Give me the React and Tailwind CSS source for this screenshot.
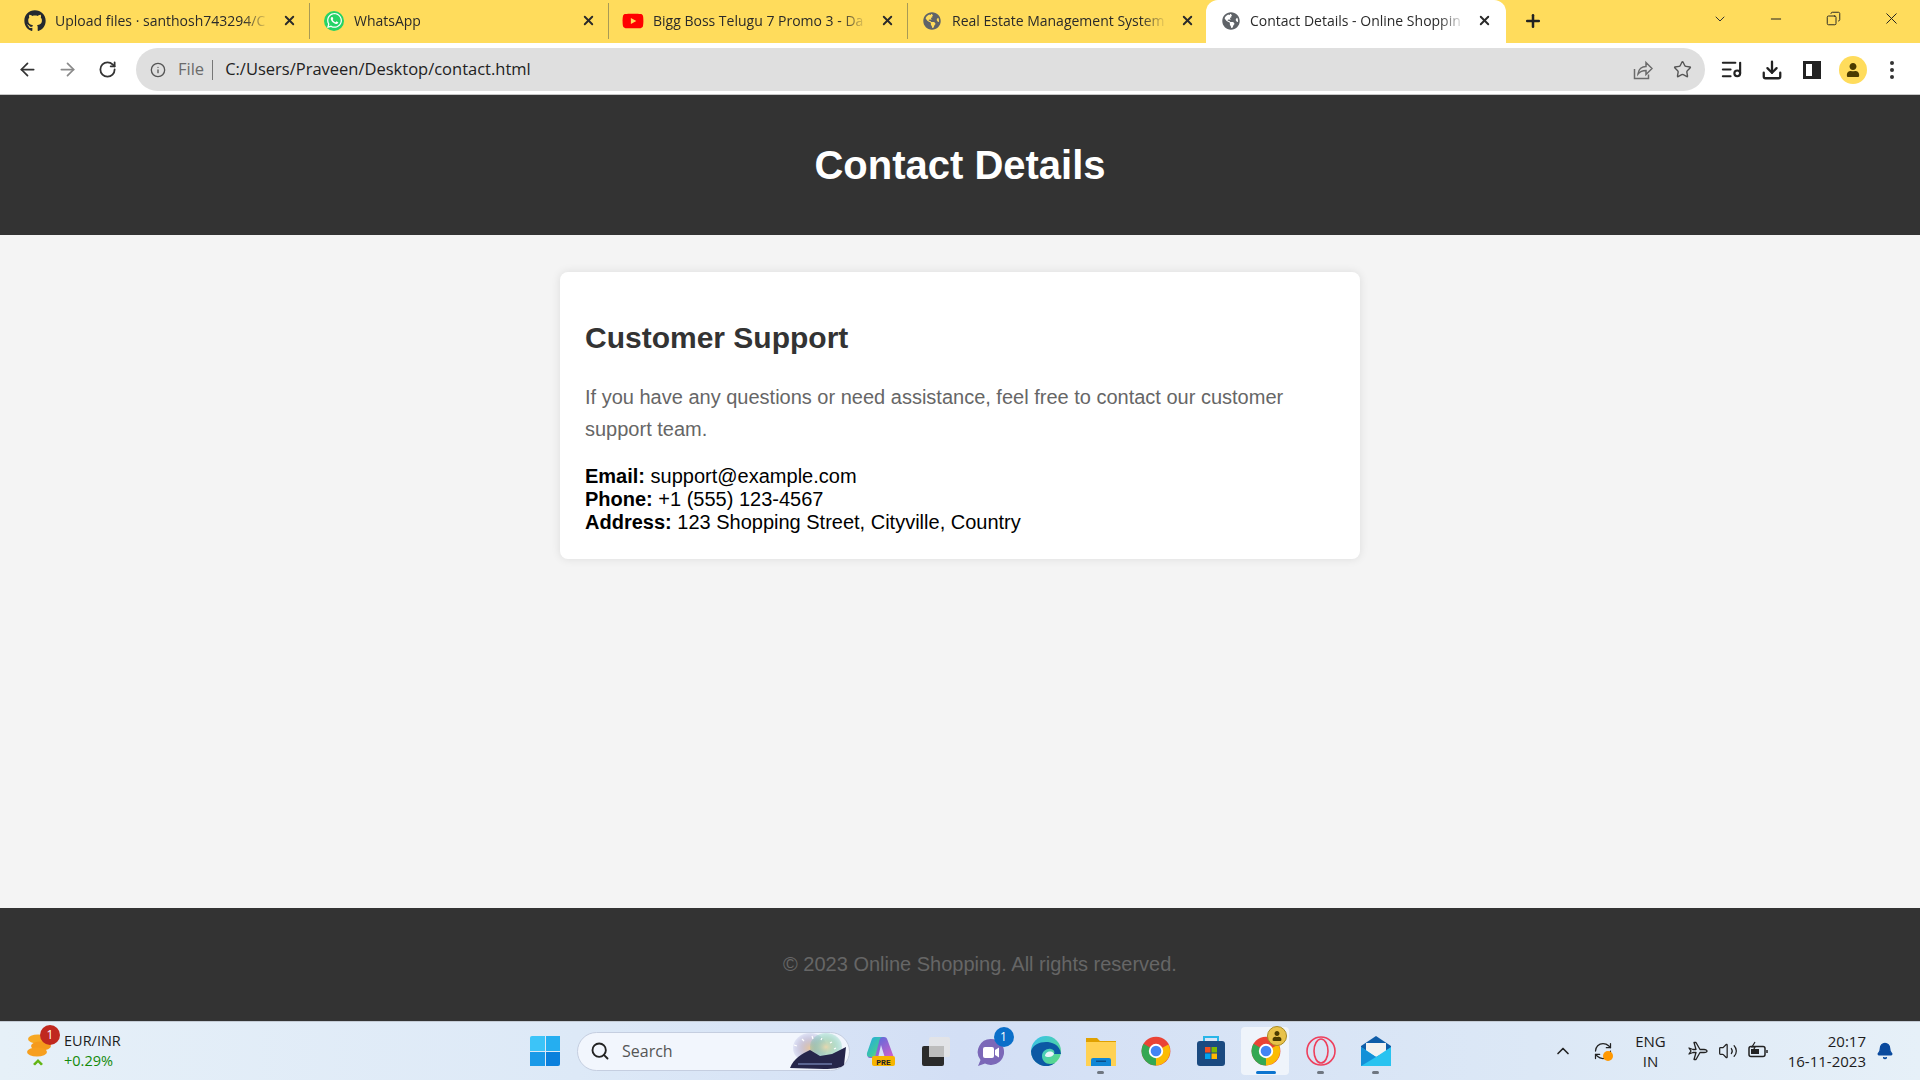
import { ArrowLeft, ArrowRight, RotateCw, Info, Star, ListMusic, Download, X, Plus, ChevronDown, Minus, Copy, Search, ChevronUp, Volume2, Bell, RefreshCw } from 'lucide-react';
import { FaGithub, FaWhatsapp, FaYoutube, FaGlobeAmericas, FaUser } from 'react-icons/fa';

const tabs = [
    { title: 'Upload files · santhosh743294/C', icon: <FaGithub className="text-[22px] text-[#24292f]" /> },
    {
        title: 'WhatsApp',
        icon: (
            <span className="w-[20px] h-[20px] rounded-full bg-[#25d366] flex items-center justify-center">
                <FaWhatsapp className="text-[17px] text-white" />
            </span>
        ),
    },
    { title: 'Bigg Boss Telugu 7 Promo 3 - Da', icon: <FaYoutube className="text-[22px] text-[#ff0000]" /> },
    { title: 'Real Estate Management System', icon: <FaGlobeAmericas className="text-[18px] text-[#5f6368]" /> },
];

const Tab = ({ title, icon, last }) => (
    <div className={`flex items-center h-[36px] mb-[2px] w-[299px] shrink-0 pl-[13px] pr-[10px] ${last ? '' : 'border-r border-[#a89a55]'}`}>
        <span className="w-[22px] flex justify-center shrink-0">{icon}</span>
        <span className="ml-[9px] flex-1 text-[14px] text-[#2a2a2a] whitespace-nowrap overflow-hidden [mask-image:linear-gradient(to_right,black_88%,transparent_100%)]">{title}</span>
        <X size={15} strokeWidth={3} className="ml-[13px] mr-[2px] text-[#2a2a2a] shrink-0" />
    </div>
);

const TabStrip = () => (
    <div className="flex items-center h-[43px] bg-[#ffdc5c] pl-[11px] shrink-0">
        {tabs.map((t, i) => <Tab key={t.title} {...t} last={i === 3} />)}
        <div className="flex items-center h-[43px] self-end w-[300px] ml-[-1px] pb-[2px] bg-white rounded-t-[12px] pl-[16px] pr-[14px] shrink-0">
            <FaGlobeAmericas className="text-[18px] text-[#5f6368] shrink-0" />
            <span className="ml-[10px] flex-1 text-[14px] text-[#2a2a2a] whitespace-nowrap overflow-hidden [mask-image:linear-gradient(to_right,black_88%,transparent_100%)]">Contact Details - Online Shoppin</span>
            <X size={15} strokeWidth={3} className="ml-[12px] text-[#2a2a2a] shrink-0" />
        </div>
        <Plus size={20} strokeWidth={3} className="ml-[17px] mb-[1px] text-[#222]" />
        <ChevronDown size={16} strokeWidth={1.5} className="ml-[169px] mb-[6px] text-[#333]" />
        <Minus size={16} strokeWidth={1.5} className="ml-[40px] mb-[6px] text-[#222]" />
        <Copy size={15} strokeWidth={1.5} className="ml-[42px] mb-[6px] text-[#222] -scale-x-100" />
        <X size={19} strokeWidth={1.25} className="ml-[41px] mb-[6px] text-[#222]" />
    </div>
);

const ShareIcon = () => (
    <svg width="20" height="20" viewBox="0 0 20 20" fill="none" stroke="#6b6b6b" strokeWidth="1.5">
        <path d="M1.5 9v9.5h14v-4" />
        <path d="M5 14c.5-5 4-7.5 8-7.5V2.5l6 6-6 6v-4c-3.5 0-6 1-8 3.5z" />
    </svg>
);

const Toolbar = () => (
    <div className="flex items-center h-[52px] bg-white border-b border-[#c8c8c8] shrink-0 pl-[17px] pt-[5px] pb-[3px]">
        <ArrowLeft size={21} strokeWidth={2} className="text-[#333]" />
        <ArrowRight size={21} strokeWidth={2} className="ml-[19px] text-[#8a8a8a]" />
        <RotateCw size={19} strokeWidth={2.25} className="ml-[20px] text-[#333]" />
        <div className="ml-[19px] w-[1569px] h-[43px] bg-[#dfdfdf] rounded-full flex items-center pl-[14px] pr-[13px]">
            <Info size={16} strokeWidth={2} className="text-[#555]" />
            <span className="ml-[12px] text-[16.5px] text-[#6b6b6b]">File</span>
            <span className="ml-[8px] w-[1px] h-[20px] bg-[#777]" />
            <span className="ml-[12px] text-[16.5px] text-[#222]">C:/Users/Praveen/Desktop/contact.html</span>
            <span className="ml-auto"><ShareIcon /></span>
            <Star size={19} strokeWidth={1.75} className="ml-[20px] text-[#555]" />
        </div>
        <ListMusic size={23} strokeWidth={2.25} className="ml-[15px] text-[#222]" />
        <Download size={22} strokeWidth={2.5} className="ml-[18px] text-[#222]" />
        <div className="ml-[20px] w-[18px] h-[18px] border-[3px] border-[#222] border-r-[9px] box-border" />
        <div className="ml-[18px] w-[28px] h-[28px] rounded-full bg-[#ffdc5c] flex items-center justify-center">
            <FaUser className="text-[14px] text-[#4a3b00]" />
        </div>
        <div className="ml-[23px] flex flex-col gap-[3px]">
            <span className="w-[4px] h-[4px] rounded-full bg-[#333]" />
            <span className="w-[4px] h-[4px] rounded-full bg-[#333]" />
            <span className="w-[4px] h-[4px] rounded-full bg-[#333]" />
        </div>
    </div>
);

const ContactCard = () => (
    <div className="w-[800px] h-[287px] mt-[37px] bg-white rounded-[8px] shadow-[0_0_10px_rgba(0,0,0,0.1)] px-[25px] pt-[47px] font-['Liberation_Sans',Arial,sans-serif]">
        <h2 className="text-[30px] leading-[38px] font-bold text-[#333]">Customer Support</h2>
        <p className="mt-[24px] text-[20px] leading-[32px] text-[#666]">If you have any questions or need assistance, feel free to contact our customer support team.</p>
        <div className="mt-[20px] text-[20px] leading-[23px] text-black">
            <div><b>Email:</b> support@example.com</div>
            <div><b>Phone:</b> +1 (555) 123-4567</div>
            <div><b>Address:</b> 123 Shopping Street, Cityville, Country</div>
        </div>
    </div>
);

const ChromeLogo = ({ size = 30 }) => (
    <svg width={size} height={size} viewBox="0 0 48 48">
        <circle cx="24" cy="24" r="23" fill="#ea4335" />
        <path d="M24 24 44 13.5A23 23 0 0 1 24 47z" fill="#fbbc04" />
        <path d="M24 24 24 47A23 23 0 0 1 4 12.5z" fill="#34a853" />
        <circle cx="24" cy="24" r="11.5" fill="#fff" />
        <circle cx="24" cy="24" r="8.5" fill="#4285f4" />
    </svg>
);

const Copilot = () => (
    <svg width="30" height="30" viewBox="0 0 30 30">
        <defs>
            <linearGradient id="cpa" x1="0" y1="0" x2="1" y2="1">
                <stop offset="0" stopColor="#1fa8e8" />
                <stop offset="0.6" stopColor="#3fc8a0" />
                <stop offset="1" stopColor="#c8d83a" />
            </linearGradient>
            <linearGradient id="cpb" x1="0" y1="0" x2="1" y2="1">
                <stop offset="0" stopColor="#3a6fe0" />
                <stop offset="1" stopColor="#d85fc8" />
            </linearGradient>
        </defs>
        <path d="M9 1h9c2 0 3 1 3.5 3L27 19c1 2 0 3-2 3h-6L15 9l-3 13H4c-2 0-3-2-2.5-4z" fill="url(#cpb)" />
        <path d="M9 1h8c-2 0-3 1-3.5 3L9 21H3.5C1.5 21 .5 19 1 17L5.5 4C6 2 7 1 9 1z" fill="url(#cpa)" />
        <rect x="6" y="20" width="23" height="10" rx="2" fill="#f7b500" />
        <text x="17.5" y="28.5" textAnchor="middle" fontSize="8" fontWeight="700" fontFamily="Liberation Mono, monospace" fill="#222">PRE</text>
    </svg>
);

const TaskView = () => (
    <svg width="30" height="30" viewBox="0 0 30 30">
        <rect x="1" y="10" width="22" height="20" rx="2" fill="#2b2b2b" />
        <rect x="8" y="1" width="21" height="20" rx="2" fill="#e4e4e4" fillOpacity="0.85" />
        <rect x="8" y="10" width="15" height="11" fill="#bdbdbd" />
    </svg>
);

const Teams = () => (
    <div className="relative w-[30px] h-[30px]">
        <svg width="30" height="30" viewBox="0 0 30 30">
            <path d="M15 3a13 13 0 1 1-6 24.5L2 30l2.5-6A13 13 0 0 1 15 3z" fill="#7b68b8" />
            <rect x="7" y="11" width="11" height="11" rx="2" fill="#fff" />
            <path d="M19 14l4-2.5v10L19 19z" fill="#fff" />
        </svg>
        <span className="absolute top-[-9px] right-[-8px] w-[20px] h-[20px] rounded-full bg-[#0b6fc9] text-white text-[12px] flex items-center justify-center">1</span>
    </div>
);

const Edge = () => (
    <svg width="30" height="30" viewBox="0 0 30 30">
        <defs>
            <linearGradient id="eg" x1="0" y1="0" x2="1" y2="1">
                <stop offset="0" stopColor="#35c1f1" />
                <stop offset="1" stopColor="#5fdc7a" />
            </linearGradient>
        </defs>
        <circle cx="15" cy="15" r="15" fill="url(#eg)" />
        <path d="M0 15A15 15 0 0 0 24 27c-7 3-13-1-13-7 0-5 5-8 9-7 3 .7 4 3 3 5h7C29 8 20 6 15 6 8 6 2 9 0 15z" fill="#0c59a4" />
        <path d="M14 20c0-3 3-5 6-4.500 2 .4 3 2 3 2.500-1 2-3 3-5 3-2 0-4-.5-4-1z" fill="#e8f4fa" />
    </svg>
);

const Folder = () => (
    <svg width="30" height="30" viewBox="0 0 30 30">
        <path d="M0 2h11l3 3h16v25H0z" fill="#e0a100" />
        <rect x="0" y="6" width="30" height="24" fill="#ffd153" />
        <path d="M5 30v-6a2 2 0 0 1 2-2h16a2 2 0 0 1 2 2v6z" fill="#0f86d6" />
        <rect x="10" y="24.5" width="10" height="1.5" fill="#0a4f8a" />
    </svg>
);

const Store = () => (
    <svg width="30" height="30" viewBox="0 0 30 30">
        <path d="M8 5V1h14v4" fill="none" stroke="#29b6e8" strokeWidth="2" />
        <rect x="1" y="5" width="28" height="25" rx="3" fill="#1b4a80" />
        <rect x="9" y="11" width="5.5" height="5.5" fill="#f25022" />
        <rect x="15.5" y="11" width="5.5" height="5.5" fill="#7fba00" />
        <rect x="9" y="17.5" width="5.5" height="5.5" fill="#00a4ef" />
        <rect x="15.5" y="17.5" width="5.5" height="5.5" fill="#ffb900" />
    </svg>
);

const Opera = () => (
    <svg width="30" height="30" viewBox="0 0 30 30" fill="none" stroke="#ee3f5c" strokeWidth="1.6">
        <circle cx="15" cy="15" r="14" />
        <ellipse cx="15" cy="15" rx="7" ry="12" />
    </svg>
);

const Mail = () => (
    <svg width="30" height="30" viewBox="0 0 30 30">
        <path d="M15 0 30 10v20H0V10z" fill="#0f5da8" />
        <path d="M5 7h20v9l-10 5-10-5z" fill="#f2f2f2" />
        <path d="M0 11l15 10 15-10v19H0z" fill="#29c3f0" />
        <path d="M0 30V11l15 10z" fill="#1490d8" />
    </svg>
);

const SearchArt = () => (
    <svg className="ml-auto" width="60" height="36" viewBox="0 0 60 36">
        <defs>
            <radialGradient id="glowa">
                <stop offset="0" stopColor="#e8c8a0" />
                <stop offset="1" stopColor="#7d7cc8" stopOpacity="0.15" />
            </radialGradient>
            <radialGradient id="glowb">
                <stop offset="0" stopColor="#e8d8b0" />
                <stop offset="1" stopColor="#38b890" stopOpacity="0.2" />
            </radialGradient>
        </defs>
        <ellipse cx="22" cy="15" rx="17" ry="15" fill="url(#glowa)" />
        <ellipse cx="38" cy="14" rx="16" ry="14" fill="url(#glowb)" />
        <path d="M6 12l3 1M14 6l2 2M24 3l1 3M34 5l-1 2M44 9l-2 1M48 15l-2 1" stroke="#fff" strokeWidth="1.2" />
        <path d="M2 35c4-10 12-14 20-18l10 6 12-2 14-7-2 18c-3 3-10 4-20 4z" fill="#26264a" />
        <path d="M10 31h34" stroke="#6c7aa8" strokeWidth="1.5" />
    </svg>
);

const Coins = () => (
    <div className="relative w-[26px] h-[36px]">
        <svg className="absolute left-0 top-0" width="26" height="36" viewBox="0 0 26 36">
            <ellipse cx="11" cy="6" rx="10" ry="4.5" fill="#f7a823" />
            <ellipse cx="14" cy="13" rx="10" ry="4.5" fill="#f59a1c" />
            <ellipse cx="10" cy="19" rx="10" ry="4.5" fill="#f79f1e" />
            <path d="M6 31l5-5 5 5-2 1.5-3-3-3 3z" fill="#62b514" />
        </svg>
        <span className="absolute left-[13px] top-[-8px] w-[20px] h-[20px] rounded-full bg-[#c0281f] text-white text-[12px] flex items-center justify-center">1</span>
    </div>
);

const Dot = ({ color = 'bg-[#6f7680]', wide }) => (
    <span className={`absolute bottom-[-8px] h-[3px] rounded-full ${color} ${wide ? 'w-[20px]' : 'w-[7px]'}`} />
);

const AppIcon = ({ children, dot, active }) => (
    <div className="relative w-[55px] h-[59px] flex items-center justify-center shrink-0">
        {active && <span className="absolute left-[3px] top-[5px] w-[48px] h-[48px] rounded-[4px] bg-white/60" />}
        <span className="relative flex items-center justify-center">
            {children}
            {dot && <Dot color={active ? 'bg-[#0b74cf]' : 'bg-[#6f7680]'} wide={active} />}
        </span>
    </div>
);

const Taskbar = () => (
    <div className="flex items-center h-[59px] shrink-0 border-t border-[#c4ccd6] bg-[linear-gradient(90deg,#e6f0f8_0%,#dde9f7_30%,#d3dff5_50%,#dce8f6_80%,#e6f0f8_100%)] text-[#1c1c1c]">
        <div className="w-[530px] shrink-0 pl-[27px] flex items-center">
            <Coins />
            <div className="ml-[11px] text-[14.5px] leading-[20px]">
                <div>EUR/INR</div>
                <div className="text-[#138a0b]">+0.29%</div>
            </div>
        </div>
        <div className="w-[30px] h-[30px] grid grid-cols-2 gap-[1px] shrink-0">
            <span className="bg-[#3cc4f8] rounded-tl-[2px]" />
            <span className="bg-[#25aef0]" />
            <span className="bg-[#1a9ae8]" />
            <span className="bg-[#0a80dc] rounded-br-[2px]" />
        </div>
        <div className="ml-[17px] w-[273px] h-[39px] shrink-0 rounded-full bg-[#f2f6fd] border border-[#c5cee0] flex items-center pl-[12px] pr-[1px]">
            <Search size={20} strokeWidth={2.25} className="text-[#222]" />
            <span className="ml-[12px] text-[16px] text-[#555]">Search</span>
            <SearchArt />
        </div>
        <div className="ml-[3px] flex shrink-0">
            <AppIcon><Copilot /></AppIcon>
            <AppIcon><TaskView /></AppIcon>
            <AppIcon><Teams /></AppIcon>
            <AppIcon><Edge /></AppIcon>
            <AppIcon dot><Folder /></AppIcon>
            <AppIcon><ChromeLogo /></AppIcon>
            <AppIcon><Store /></AppIcon>
            <AppIcon dot active>
                <ChromeLogo />
                <span className="absolute top-[-10px] right-[-6px] w-[20px] h-[20px] rounded-full bg-[#e8c24a] border border-[#a88a20] flex items-center justify-center">
                    <FaUser className="text-[10px] text-[#4a3b00]" />
                </span>
            </AppIcon>
            <AppIcon dot><Opera /></AppIcon>
            <AppIcon dot><Mail /></AppIcon>
        </div>
        <div className="ml-auto flex items-center shrink-0 pr-[26px]">
            <ChevronUp size={20} strokeWidth={2} className="text-[#222]" />
            <div className="relative ml-[20px]">
                <RefreshCw size={20} strokeWidth={1.5} className="text-[#222]" />
                <span className="absolute right-0 bottom-0 w-[10px] h-[10px] rounded-full bg-[#ff9800]" />
            </div>
            <div className="ml-[22px] text-[15px] leading-[20px] text-center">
                <div>ENG</div>
                <div>IN</div>
            </div>
            <svg className="ml-[22px]" width="20" height="20" viewBox="0 0 20 20" fill="none" stroke="#222" strokeWidth="1.3" strokeLinejoin="round">
                <path d="M1 7l2 3-2 3 4-1.5h3l-2 7h2l4-7h4c2 0 3-.8 3-1.5s-1-1.5-3-1.5h-4l-4-7H6l2 7H5z" />
            </svg>
            <Volume2 size={20} strokeWidth={1.5} className="ml-[10px] text-[#222]" />
            <svg className="ml-[10px]" width="20" height="20" viewBox="0 0 20 20" fill="none" stroke="#222" strokeWidth="1.5">
                <rect x="1" y="5.5" width="16" height="10" rx="2" />
                <rect x="3" y="8" width="8" height="5" fill="#222" stroke="none" />
                <path d="M19 9v3" />
                <path d="M7 1 4 6h3L5 10" strokeWidth="1.2" />
            </svg>
            <div className="ml-[20px] text-[15px] leading-[20px] text-right">
                <div>20:17</div>
                <div>16-11-2023</div>
            </div>
            <Bell size={18} fill="#0a4a9e" className="ml-[10px] text-[#0a4a9e]" />
        </div>
    </div>
);

export default function App() {
    return (
        <div className="h-screen flex flex-col overflow-hidden bg-[#f4f4f4] font-['Open_Sans',sans-serif]">
            <TabStrip />
            <Toolbar />
            <header className="h-[140px] shrink-0 bg-[#333] flex items-center justify-center font-['Liberation_Sans',Arial,sans-serif]">
                <h1 className="text-[40px] font-bold text-white">Contact Details</h1>
            </header>
            <main className="flex-1 flex justify-center items-start">
                <ContactCard />
            </main>
            <footer className="h-[113px] shrink-0 bg-[#333] pl-[40px] pb-[2px] flex items-center justify-center font-['Liberation_Sans',Arial,sans-serif]">
                <p className="text-[20px] text-[#666]">© 2023 Online Shopping. All rights reserved.</p>
            </footer>
            <Taskbar />
        </div>
    );
}
